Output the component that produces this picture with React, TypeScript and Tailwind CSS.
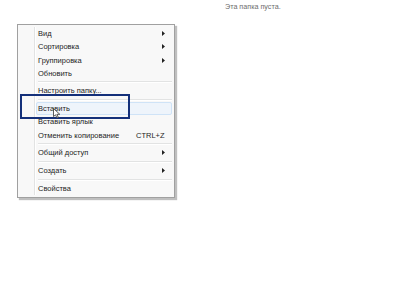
import React from 'react';

type Item =
  | { kind: 'item'; label: string; arrow?: boolean; shortcut?: string; hover?: boolean }
  | { kind: 'sep' };

const items: Item[] = [
  { kind: 'item', label: 'Вид', arrow: true },
  { kind: 'item', label: 'Сортировка', arrow: true },
  { kind: 'item', label: 'Группировка', arrow: true },
  { kind: 'item', label: 'Обновить' },
  { kind: 'sep' },
  { kind: 'item', label: 'Настроить папку...' },
  { kind: 'sep' },
  { kind: 'item', label: 'Вставить', hover: true },
  { kind: 'item', label: 'Вставить ярлык' },
  { kind: 'item', label: 'Отменить копирование', shortcut: 'CTRL+Z' },
  { kind: 'sep' },
  { kind: 'item', label: 'Общий доступ', arrow: true },
  { kind: 'sep' },
  { kind: 'item', label: 'Создать', arrow: true },
  { kind: 'sep' },
  { kind: 'item', label: 'Свойства' },
];

function Arrow() {
  return (
    <svg width="3" height="5" viewBox="0 0 3 5" className="ml-auto shrink-0">
      <path d="M0 0 L3 2.5 L0 5 Z" fill="#222" />
    </svg>
  );
}

function Cursor() {
  return (
    <div className="absolute left-[53px] top-[108px] w-[8px] h-[11px]">
      <svg width="8" height="11" viewBox="0 0 8 11" className="block">
        <path d="M0.5 0.5 L0.5 8.5 L2.5 6.8 L4 10 L5.3 9.4 L3.9 6.3 L6.8 6.3 Z" fill="#fff" stroke="#333" strokeWidth="0.8" strokeLinejoin="round" />
      </svg>
    </div>
  );
}

export default function App() {
  return (
    <div
      className="relative w-[400px] h-[284px] bg-white overflow-hidden pt-[2px] pl-[225px]"
      style={{ fontFamily: '"Liberation Sans", Arial, sans-serif' }}
    >
      {/* Empty folder text */}
      <p className="text-[7.2px] leading-[10px] text-[#6d6d6d]">Эта папка пуста.</p>

      {/* Context menu */}
      <div className="absolute left-[17px] top-[24px] w-[158px] h-[174px] flex bg-[#f8f8f8] border border-[#a0a0a0] shadow-[2px_2px_1px_rgba(0,0,0,0.25)] py-[2px] px-[1px]">
        {/* gutter */}
        <div className="w-[16px] shrink-0 border-r border-[#e2e3e3] shadow-[1px_0_0_#ffffff]" />
        <div className="flex-1 flex flex-col pl-[1px] pr-[1px]">
          {items.map((it, i) =>
            it.kind === 'sep' ? (
              <div key={i} className="h-[4.7px] flex flex-col justify-center pl-[2px]">
                <div className="h-px bg-[#e2e3e3]" />
                <div className="h-px bg-white" />
              </div>
            ) : (
              <div
                key={i}
                className={
                  'h-[13.33px] flex items-center pr-[6px] text-[7.5px] text-[#1e1e1e] rounded-[2px] border ' +
                  (it.hover ? 'bg-[#eef4fb] border-[#cfe3f7]' : 'border-transparent')
                }
              >
                <span className="w-[99px] pl-[1px] whitespace-nowrap">{it.label}</span>
                {it.shortcut && <span className="whitespace-nowrap">{it.shortcut}</span>}
                {it.arrow && <Arrow />}
              </div>
            )
          )}
        </div>
      </div>

      {/* Blue annotation rectangle */}
      <div className="absolute left-[20px] top-[94px] w-[110px] h-[25px] border-2 border-[#14307a]" />

      <Cursor />
    </div>
  );
}
